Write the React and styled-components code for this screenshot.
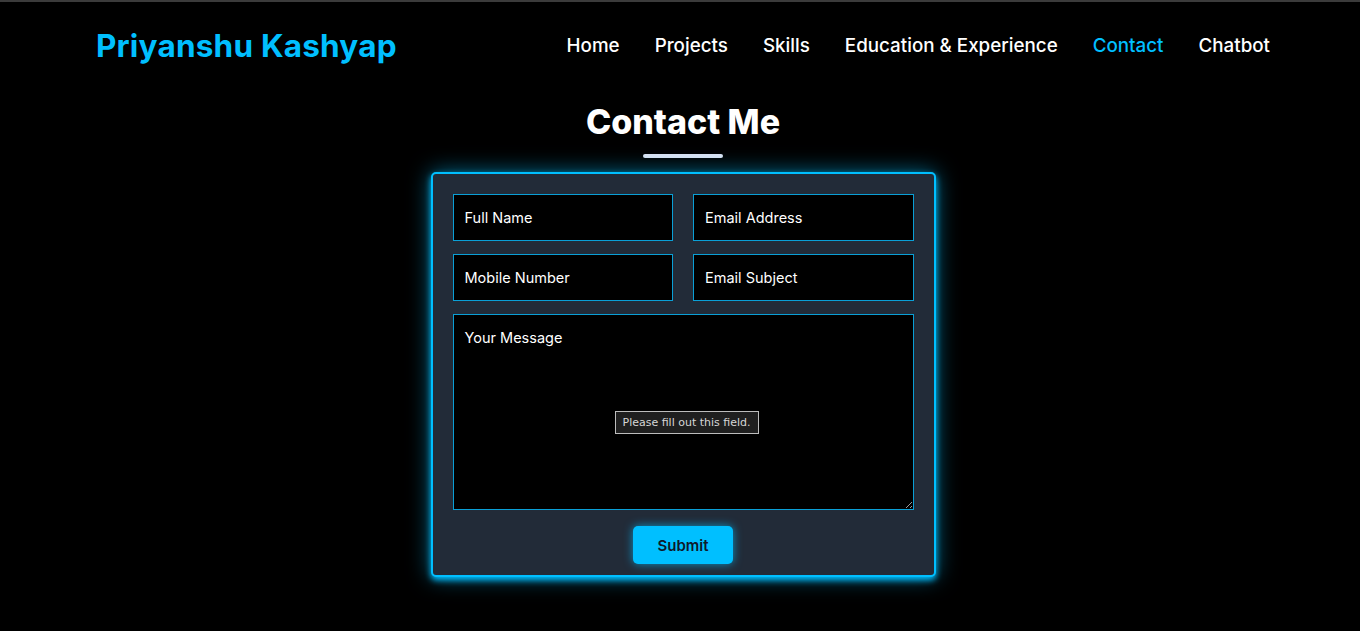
import React from 'react';
import styled, { createGlobalStyle } from 'styled-components';

const GlobalStyle = createGlobalStyle`
  * { box-sizing: border-box; }
  body {
    margin: 0;
    background: #000;
    border-top: 2px solid #3b3b3b;
    font-family: Inter, "Noto Sans", sans-serif;
    color: #fff;
  }
`;

const Page = styled.div`
  min-height: 629px;
  background: #000;
`;

const Header = styled.header`
  display: flex;
  align-items: center;
  justify-content: space-between;
  height: 86px;
  padding: 0 90px 0 96px;
`;

const Logo = styled.div`
  font-size: 31.5px;
  font-weight: 700;
  color: #00bfff;
  letter-spacing: 0.2px;
`;

const Nav = styled.nav`
  display: flex;
  gap: 35px;
`;

const NavLink = styled.a`
  font-size: 18.8px;
  font-weight: 500;
  color: ${({ active }) => (active ? '#00bfff' : '#fff')};
  text-decoration: none;
`;

const Section = styled.section`
  display: flex;
  flex-direction: column;
  align-items: center;
  padding-left: 6px;
`;

const Title = styled.h2`
  margin: 0;
  font-size: 34px;
  font-weight: 800;
  line-height: 34px;
  padding-top: 17px;
`;

const Underline = styled.div`
  width: 80px;
  height: 4px;
  border-radius: 2px;
  background: #dbe3f3;
  margin-top: 15px;
`;

const Card = styled.form`
  margin-top: 14px;
  width: 505px;
  padding: 20px 20px 11px;
  background: #222b38;
  border: 2px solid #00bfff;
  border-radius: 5px;
  box-shadow: 0 0 22px rgba(0, 191, 255, 0.55), 0 3px 6px #00bfff;
  display: grid;
  grid-template-columns: minmax(0, 1fr) minmax(0, 1fr);
  column-gap: 20px;
  row-gap: 13px;
`;

const Field = styled.input`
  width: 100%;
  height: 47px;
  background: #000;
  border: 1px solid #0a9fd6;
  color: #fff;
  font-family: inherit;
  font-size: 14.5px;
  padding: 0 11px;
  outline: none;
  &::placeholder { color: #fff; }
`;

const MessageWrap = styled.div`
  grid-column: 1 / -1;
  position: relative;
  display: flex;
`;

const Message = styled.textarea`
  width: 100%;
  height: 196px;
  background: #000;
  border: 1px solid #0a9fd6;
  color: #fff;
  font-family: inherit;
  font-size: 14.5px;
  padding: 14px 11px;
  outline: none;
  resize: vertical;
  &::placeholder { color: #fff; }
`;

const Tooltip = styled.div`
  position: absolute;
  left: 162px;
  top: 97px;
  padding: 4px 7px;
  background: #1f1f1f;
  border: 1px solid #bdbdbd;
  color: #d6d6d6;
  font-family: "DejaVu Sans", sans-serif;
  font-size: 11px;
  white-space: nowrap;
`;

const Actions = styled.div`
  grid-column: 1 / -1;
  display: flex;
  justify-content: center;
  padding-top: 3px;
`;

const Submit = styled.button`
  width: 100px;
  height: 38px;
  border: none;
  border-radius: 5px;
  background: #00bfff;
  color: #0e1a2b;
  font-family: inherit;
  font-size: 15px;
  font-weight: 600;
  box-shadow: 0 0 10px rgba(0, 191, 255, 0.7);
  cursor: pointer;
`;

const links = ['Home', 'Projects', 'Skills', 'Education & Experience', 'Contact', 'Chatbot'];

export default function App() {
  return (
    <Page>
      <GlobalStyle />
      <Header>
        <Logo>Priyanshu Kashyap</Logo>
        <Nav>
          {links.map((l) => (
            <NavLink key={l} href="#" active={l === 'Contact' ? 1 : 0}>{l}</NavLink>
          ))}
        </Nav>
      </Header>
      <Section>
        <Title>Contact Me</Title>
        <Underline />
        <Card onSubmit={(e) => e.preventDefault()}>
          <Field placeholder="Full Name" />
          <Field placeholder="Email Address" />
          <Field placeholder="Mobile Number" />
          <Field placeholder="Email Subject" />
          <MessageWrap>
            <Message placeholder="Your Message" />
            <Tooltip>Please fill out this field.</Tooltip>
          </MessageWrap>
          <Actions>
            <Submit type="submit">Submit</Submit>
          </Actions>
        </Card>
      </Section>
    </Page>
  );
}
